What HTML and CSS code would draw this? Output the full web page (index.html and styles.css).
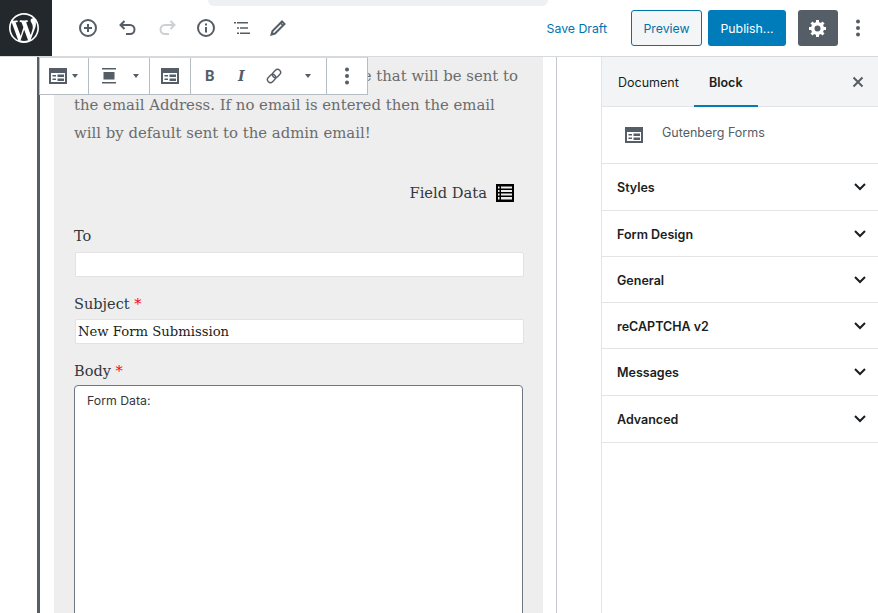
FILE: index.html
```html
<!DOCTYPE html>
<html lang="en">
<head>
    <meta charset="UTF-8">
    <title>Edit Post</title>
    <link rel="stylesheet" href="styles.css">
</head>
<body>
    <div class="page">
        <div class="top-glow"></div>
        <div class="topbar">
            <div class="logo">
                <svg width="30" height="30" viewBox="0 0 20 20"><path fill="#fff" d="M20 10c0-5.51-4.49-10-10-10C4.48 0 0 4.49 0 10c0 5.52 4.48 10 10 10 5.51 0 10-4.48 10-10zM7.78 15.37L4.37 6.22c.55-.02 1.17-.08 1.17-.08.5-.06.44-1.13-.06-1.11 0 0-1.45.11-2.37.11-.18 0-.37 0-.58-.01C4.12 2.69 6.87 1.11 10 1.11c2.33 0 4.45.87 6.05 2.34-.68-.11-1.65.39-1.65 1.58 0 .74.45 1.36.9 2.1.35.61.55 1.36.55 2.46 0 1.49-1.4 5-1.4 5l-3.03-8.37c.54-.02.82-.17.82-.17.5-.05.44-1.25-.06-1.22 0 0-1.44.12-2.38.12-.87 0-2.33-.12-2.33-.12-.5-.03-.56 1.2-.06 1.22l.92.08 1.26 3.41zM17.41 10c.24-.64.74-1.87.43-4.25.7 1.29 1.05 2.71 1.05 4.25 0 3.29-1.73 6.24-4.4 7.78.97-2.59 1.94-5.2 2.92-7.78zM6.1 18.09C3.12 16.65 1.11 13.53 1.11 10c0-1.3.23-2.48.72-3.59C3.25 10.3 4.67 14.2 6.1 18.09zm4.03-6.86l2.58 6.98c-.86.29-1.74.45-2.71.45-.79 0-1.57-.11-2.29-.33.81-2.38 1.63-4.74 2.42-7.1z"/></svg>
            </div>
            <div class="tools">
                <svg class="tool tool-add" width="24" height="24" viewBox="0 0 24 24"><circle cx="12" cy="12" r="8" fill="none" stroke="#555d66" stroke-width="2"/><path d="M8 12h8M12 8v8" stroke="#555d66" stroke-width="2"/></svg>
                <svg class="tool tool-undo" width="24" height="24" viewBox="0 0 24 24"><path d="M9.5 5 5.5 9l4 4" fill="none" stroke="#555d66" stroke-width="2"/><path d="M5.5 9H15a4.5 4.5 0 0 1 0 9h-4" fill="none" stroke="#555d66" stroke-width="2"/></svg>
                <svg class="tool tool-redo" width="24" height="24" viewBox="0 0 24 24"><path d="m14.5 5 4 4-4 4" fill="none" stroke="#ccd0d4" stroke-width="2"/><path d="M18.5 9H9a4.5 4.5 0 0 0 0 9h4" fill="none" stroke="#ccd0d4" stroke-width="2"/></svg>
                <svg class="tool tool-info" width="24" height="24" viewBox="0 0 24 24"><circle cx="12" cy="12" r="8" fill="none" stroke="#555d66" stroke-width="2"/><path d="M11 11h2v5.5h-2zM11 7.5h2v2h-2z" fill="#555d66"/></svg>
                <svg class="tool tool-list" width="24" height="24" viewBox="0 0 24 24"><path d="M4 6h2v1.5H4zM7 6h11v1.5H7zM7 11.2h2v1.5H7zM10 11.2h8v1.5h-8zM7 16.5h2V18H7zM10 16.5h10V18H10z" fill="#555d66"/></svg>
                <svg class="tool tool-edit" width="24" height="24" viewBox="0 0 24 24"><path d="M16 5.5 18.5 8 9 17.5l-3.5 1 1-3.500L16 5.500z" fill="none" stroke="#555d66" stroke-width="2"/><path d="m14.500 7 2.500 2.500" stroke="#555d66" stroke-width="1.500"/></svg>
            </div>
            <div class="actions">
                <span class="save-draft">Save Draft</span>
                <span class="btn btn-preview">Preview</span>
                <span class="btn btn-publish">Publish...</span>
                <span class="btn-settings">
                    <svg width="20" height="20" viewBox="0 0 20 20"><path fill="#fff" d="M18 12h-2.18c-.17.7-.44 1.35-.81 1.93l1.54 1.54-2.1 2.1-1.54-1.54c-.58.36-1.23.64-1.91.81V19H8v-2.18c-.68-.17-1.33-.45-1.91-.81l-1.54 1.54-2.12-2.12 1.54-1.54c-.36-.58-.64-1.23-.81-1.89H1V9h2.18c.17-.7.45-1.35.81-1.93L2.45 5.53l2.1-2.1 1.54 1.54c.58-.36 1.23-.64 1.91-.81V2h3v2.18c.68.17 1.33.45 1.91.81l1.54-1.54 2.12 2.12-1.54 1.54c.36.58.64 1.23.81 1.89H18v3zm-8.5 1.5a3 3 0 1 0 0-6 3 3 0 0 0 0 6z"/></svg>
                </span>
                <svg class="kebab" width="6" height="20" viewBox="0 0 6 20"><circle cx="3" cy="3.5" r="2"/><circle cx="3" cy="10" r="2"/><circle cx="3" cy="16.5" r="2"/></svg>
            </div>
        </div>
        <div class="main">
            <div class="editor">
                <div class="block-toolbar">
                    <div class="tb-group tb-first">
                        <svg width="18" height="16" viewBox="0 0 18 16"><path class="form-ico" fill-rule="evenodd" d="M0 0h18v16H0zM2 5v9h14V5zM3.5 7H7v1.5H3.5zM8.5 6.5H15V9H8.5zM3.5 10.5H7V12H3.5zM8.5 10.5H15V13H8.5z"/></svg>
                        <span class="caret"></span>
                    </div>
                    <div class="tb-group tb-align">
                        <svg width="14" height="16" viewBox="0 0 14 16"><path d="M0 0h14v1.5H0zM1.5 4h11v7.5h-11zM0 14h14v1.5H0z" fill="#555d66"/></svg>
                        <span class="caret"></span>
                    </div>
                    <div class="tb-group tb-form">
                        <svg width="18" height="16" viewBox="0 0 18 16"><path class="form-ico" fill-rule="evenodd" d="M0 0h18v16H0zM2 5v9h14V5zM3.5 7H7v1.5H3.5zM8.5 6.5H15V9H8.5zM3.5 10.5H7V12H3.5zM8.5 10.5H15V13H8.5z"/></svg>
                    </div>
                    <div class="tb-group tb-format">
                        <span class="fmt-b">B</span>
                        <span class="fmt-i">I</span>
                        <svg class="fmt-link" width="16" height="16" viewBox="0 0 16 16"><g transform="rotate(-45 8 8)" fill="none" stroke="#555d66" stroke-width="1.4"><rect x="0" y="5" width="9" height="6" rx="3"/><rect x="7" y="5" width="9" height="6" rx="3"/></g></svg>
                        <span class="caret"></span>
                    </div>
                    <div class="tb-group tb-more">
                        <svg width="6" height="20" viewBox="0 0 6 20"><circle cx="3" cy="3.5" r="2" fill="#555d66"/><circle cx="3" cy="10" r="2" fill="#555d66"/><circle cx="3" cy="16.5" r="2" fill="#555d66"/></svg>
                    </div>
                </div>
                <div class="canvas">
                    <div class="block">
                        <div class="intro">
                            <p class="intro-first">e that will be sent to</p>
                            <p>the email Address. If no email is entered then the email</p>
                            <p>will by default sent to the admin email!</p>
                        </div>
                        <div class="field-data">
                            <span>Field Data</span>
                            <svg width="18" height="18" viewBox="0 0 18 18"><path fill-rule="evenodd" d="M0 0h18v18H0zM2 2.5v2h1.5v-2zM5 2.5v2h11v-2zM2 6v2h1.5V6zM5 6v2h11V6zM2 9.5v2h1.5v-2zM5 9.5v2h11v-2zM2 13v2.5h1.5V13zM5 13v2.5h11V13z"/></svg>
                        </div>
                        <div class="label label-to">To</div>
                        <div class="input"></div>
                        <div class="label label-subject">Subject <span class="req">*</span></div>
                        <div class="input">New Form Submission</div>
                        <div class="label label-body">Body <span class="req">*</span></div>
                        <div class="textarea">Form Data:</div>
                    </div>
                </div>
            </div>
            <div class="sidebar">
                <div class="tabs">
                    <span class="tab">Document</span>
                    <span class="tab tab-active">Block</span>
                    <svg class="close" width="12" height="12" viewBox="0 0 12 12"><path d="M1.5 1.5l9 9M10.5 1.5l-9 9" stroke="#555d66" stroke-width="2"/></svg>
                </div>
                <div class="block-card">
                    <svg width="18" height="16" viewBox="0 0 18 16"><path class="form-ico" fill-rule="evenodd" d="M0 0h18v16H0zM2 5v9h14V5zM3.5 7H7v1.5H3.5zM8.5 6.5H15V9H8.5zM3.5 10.5H7V12H3.5zM8.5 10.5H15V13H8.5z"/></svg>
                    <span>Gutenberg Forms</span>
                </div>
                <div class="panel panel-tall">Styles<svg class="chev" width="12" height="8" viewBox="0 0 12 8"><path d="m1 1 5 5 5-5" fill="none" stroke="#191e23" stroke-width="2"/></svg></div>
                <div class="panel">Form Design<svg class="chev" width="12" height="8" viewBox="0 0 12 8"><path d="m1 1 5 5 5-5" fill="none" stroke="#191e23" stroke-width="2"/></svg></div>
                <div class="panel">General<svg class="chev" width="12" height="8" viewBox="0 0 12 8"><path d="m1 1 5 5 5-5" fill="none" stroke="#191e23" stroke-width="2"/></svg></div>
                <div class="panel">reCAPTCHA v2<svg class="chev" width="12" height="8" viewBox="0 0 12 8"><path d="m1 1 5 5 5-5" fill="none" stroke="#191e23" stroke-width="2"/></svg></div>
                <div class="panel panel-tall">Messages<svg class="chev" width="12" height="8" viewBox="0 0 12 8"><path d="m1 1 5 5 5-5" fill="none" stroke="#191e23" stroke-width="2"/></svg></div>
                <div class="panel panel-tall">Advanced<svg class="chev" width="12" height="8" viewBox="0 0 12 8"><path d="m1 1 5 5 5-5" fill="none" stroke="#191e23" stroke-width="2"/></svg></div>
            </div>
        </div>
    </div>
</body>
</html>
```

FILE: styles.css
```css
*{
    margin: 0;
    padding: 0;
    box-sizing: border-box;
}
html, body{
    height: 100%;
    overflow: hidden;
    background: #fff;
}
body{
    font-family: Inter, "Liberation Sans", sans-serif;
    font-size: 13px;
    color: #191e23;
}
.page{
    display: flex;
    flex-direction: column;
    height: 613px;
    position: relative;
}
.top-glow{
    position: absolute;
    top: 0;
    left: 208px;
    width: 340px;
    height: 6px;
    background: #eef0f2;
    border-radius: 0 0 14px 14px;
}
.topbar{
    display: flex;
    align-items: center;
    height: 57px;
    flex: none;
    border-bottom: 1px solid #d6d9dd;
}
.logo{
    width: 52px;
    height: 56px;
    padding-right: 4px;
    background: #23282d;
    display: flex;
    align-items: center;
    justify-content: center;
}
.tools{
    display: flex;
    align-items: center;
    padding-left: 24px;
}
.tool-undo{
    margin-left: 15px;
}
.tool-redo{
    margin-left: 17px;
}
.tool-info{
    margin-left: 14px;
}
.tool-list{
    margin-left: 12px;
}
.tool-edit{
    margin-left: 12px;
}
.actions{
    margin-left: auto;
    display: flex;
    align-items: center;
    padding-right: 17px;
}
.save-draft{
    color: #0073ae;
    font-size: 12.3px;
    margin-right: 24px;
}
.btn{
    height: 36px;
    display: flex;
    align-items: center;
    justify-content: center;
    border-radius: 3px;
    font-size: 12.3px;
}
.btn-preview{
    width: 71px;
    margin-right: 6px;
    color: #0073aa;
    background: #f3f5f6;
    border: 1px solid #0073aa;
}
.btn-publish{
    width: 78px;
    margin-right: 12px;
    color: #fff;
    background: #007cba;
}
.btn-settings{
    width: 40px;
    height: 36px;
    margin-right: 17px;
    background: #555d66;
    border-radius: 3px;
    display: flex;
    align-items: center;
    justify-content: center;
}
.kebab{
    fill: #555d66;
}
.main{
    flex: 1;
    display: flex;
    min-height: 0;
}
.editor{
    flex: 1;
    position: relative;
    overflow: hidden;
}
.canvas{
    margin-left: 37px;
    width: 520px;
    height: 100%;
    border-left: 3px solid #555d66;
    border-right: 1px solid #c4c8cc;
    padding-left: 14px;
    padding-right: 13px;
}
.block{
    background: #eee;
    height: 100%;
    padding: 5px 19px 0 20px;
    font-family: "DejaVu Serif", serif;
}
.intro{
    color: #6c6c6c;
    font-size: 14.9px;
    line-height: 28.5px;
    white-space: nowrap;
}
.intro-first{
    text-align: right;
    padding-right: 6px;
}
.field-data{
    display: flex;
    justify-content: flex-end;
    align-items: center;
    gap: 9px;
    margin-top: 36px;
    padding-right: 10px;
    font-size: 14.7px;
    color: #32373c;
}
.label{
    font-size: 14.5px;
    color: #32373c;
}
.label-to{
    margin-top: 26px;
    margin-bottom: 8px;
}
.label-subject{
    margin-top: 19px;
    margin-bottom: 7px;
}
.label-body{
    margin-top: 19px;
    margin-bottom: 6px;
}
.req{
    color: #f00;
}
.input{
    height: 25px;
    margin-left: 1px;
    background: #fff;
    border: 1px solid #e2e2e2;
    border-radius: 2px;
    padding-left: 2px;
    font-size: 13.2px;
    line-height: 24px;
    color: #191e23;
}
.textarea{
    height: 300px;
    margin-right: 1px;
    background: #fff;
    border: 1px solid #6c7781;
    border-radius: 4px;
    padding: 7px 12px;
    font-family: Inter, "Liberation Sans", sans-serif;
    font-size: 12.3px;
    color: #32373c;
}
.block-toolbar{
    position: absolute;
    top: 0;
    left: 39px;
    height: 38px;
    display: flex;
    background: #fff;
    border: 1px solid #b5bcc2;
    border-top-color: #d6d9dd;
}
.tb-group{
    display: flex;
    align-items: center;
    height: 100%;
    border-right: 1px solid #b5bcc2;
}
.tb-first{
    width: 49px;
    padding-left: 9px;
    gap: 5px;
}
.tb-align{
    width: 61px;
    padding-left: 13px;
    gap: 17px;
}
.tb-form{
    width: 41px;
    justify-content: center;
}
.tb-format{
    width: 136px;
    padding-left: 14px;
}
.tb-more{
    width: 40px;
    justify-content: center;
    border-right: none;
}
.form-ico{
    fill: #555d66;
}
.caret{
    width: 0;
    height: 0;
    border-left: 3.5px solid transparent;
    border-right: 3.5px solid transparent;
    border-top: 4px solid #555d66;
}
.fmt-b{
    font-family: Roboto, sans-serif;
    font-weight: 700;
    font-size: 15px;
    color: #555d66;
    width: 33px;
}
.fmt-i{
    font-family: "DejaVu Serif", serif;
    font-style: italic;
    font-weight: 700;
    font-size: 14px;
    color: #555d66;
    width: 28px;
}
.fmt-link{
    margin-right: 23px;
}
.sidebar{
    width: 277px;
    flex: none;
    border-left: 1px solid #e2e4e7;
}
.tabs{
    display: flex;
    align-items: center;
    height: 50px;
    background: #f3f4f5;
    border-bottom: 1px solid #e2e4e7;
    padding-left: 16px;
}
.tab{
    font-size: 12.5px;
    height: 50px;
    line-height: 51px;
    margin-right: 31px;
}
.tab-active{
    font-weight: 600;
    width: 64px;
    margin-left: -16px;
    margin-right: 0;
    text-align: center;
    border-bottom: 2px solid #007cba;
}
.close{
    margin-left: auto;
    margin-right: 14px;
}
.block-card{
    display: flex;
    align-items: flex-start;
    height: 57px;
    padding: 18px 0 0 23px;
    border-bottom: 1px solid #e2e4e7;
    color: #555d66;
    font-size: 12.5px;
}
.block-card svg{
    margin-top: 2px;
    margin-right: 19px;
}
.panel{
    display: flex;
    align-items: center;
    justify-content: space-between;
    height: 46px;
    padding: 1px 12px 0 15px;
    border-bottom: 1px solid #e2e4e7;
    font-weight: 600;
    font-size: 12.5px;
}
.panel-tall{
    height: 47px;
    padding-top: 0;
}
```
